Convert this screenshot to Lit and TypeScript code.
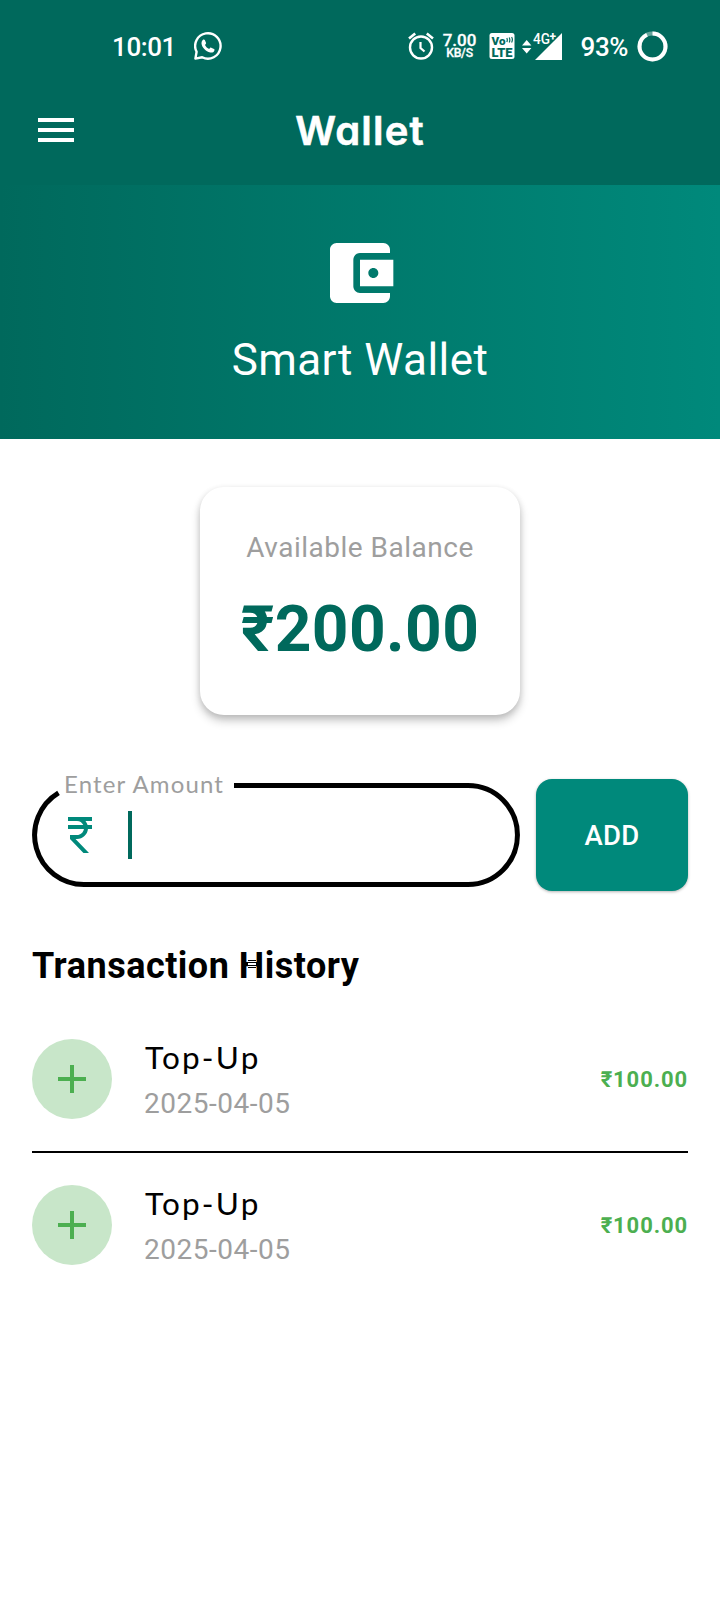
import { LitElement, html, css } from "lit";
import { customElement, property } from "lit/decorators.js";

@customElement("status-bar")
class StatusBar extends LitElement {
  static styles = css`
    :host { display: flex; align-items: center; height: 92px; padding: 0 52px 0 112px; box-sizing: border-box; color: #fff; font-family: Roboto, sans-serif; }
    svg { display: block; flex: none; }
    .time { font-size: 26px; line-height: 30px; padding-top: 2px; font-weight: 500; letter-spacing: -0.4px; width: 82px; }
    .grow { flex: 1; }
    .rate { width: 34px; margin: 0 12px 0 9px; font-weight: 500; display: flex; flex-direction: column; align-items: center; white-space: nowrap; }
    .num { font-size: 17px; line-height: 14px; -webkit-text-stroke: 0.3px #fff; }
    .unit { font-size: 12.2px; line-height: 12px; letter-spacing: -0.2px; -webkit-text-stroke: 0.3px #fff; }
    .net-icon { margin-left: 5px; }
    .pct { font-size: 26px; line-height: 30px; padding-top: 2px; font-weight: 500; margin: 0 9px 0 19px; letter-spacing: -0.4px; }
    .vo { font: 900 11.5px Roboto, sans-serif; }
    .lte { font: 900 12px Roboto, sans-serif; }
    .net { font: 500 14px Roboto, sans-serif; }
    .plus { font: 700 12px Roboto, sans-serif; }
  `;
  render() {
    return html`
      <span class="time">10:01</span>
      <svg width="28" height="28" viewBox="0 0 28 28">
        <path d="M1.400 26.600 2.600 19.800A12.700 12.700 0 1 1 8.200 25.300Z" fill="none" stroke="#fff" stroke-width="2.400" stroke-linejoin="round"/>
        <path d="M9 7.800c.6-.6 1.500-.4 1.800.3l1.200 2.700c.2.600-.1 1.100-1 2.100 1 1.900 2.300 3.100 4.200 4 .9-1.100 1.400-1.500 2-1.200l2.800 1.300c.6.300.6.800.4 1.400-.6 1.700-2.300 2.500-4.100 2.100-4.600-1-8.400-4.900-8.800-8.900 0-1.700.5-2.900 1.500-3.800Z" fill="#fff"/>
      </svg>
      <span class="grow"></span>
      <svg width="26" height="28" viewBox="0 0 26 28" fill="none" stroke="#fff">
        <circle cx="13" cy="15.500" r="11" stroke-width="2.400"/>
        <path d="M1 6.400 7.200 1.400M25 6.400 18.800 1.400" stroke-width="2.600"/>
        <path d="M12.500 10v6l4 3.500" stroke-width="2.200"/>
      </svg>
      <span class="rate"><span class="num">7.00</span><span class="unit">KB/S</span></span>
      <svg width="26" height="26" viewBox="0 0 26 26">
        <rect width="25" height="26" x=".5" rx="2.500" fill="#fff"/>
        <text class="vo" x="2.500" y="11.500" fill="#00695c" textLength="14" lengthAdjust="spacingAndGlyphs">Vo</text>
        <path d="M17.800 5q1 2 0 4M20.200 4.500q1.300 2.500 0 5M22.600 4q1.600 2.500 0 5.500" fill="none" stroke="#00695c" stroke-width="1.200"/>
        <text class="lte" x="2.500" y="23.500" fill="#00695c" textLength="21" lengthAdjust="spacingAndGlyphs">LTE</text>
      </svg>
      <svg class="net-icon" width="42" height="30" viewBox="0 0 42 30" fill="#fff">
        <path d="M2 14.500 6.700 9l4.700 5.500ZM2 17h9.400l-4.700 5.500Z"/>
        <path d="M15 29 42 2v27Z"/>
        <text class="net" x="13" y="12.500" textLength="17" lengthAdjust="spacingAndGlyphs" stroke="#00695c" stroke-width="1.500" paint-order="stroke">4G</text>
        <text class="plus" x="29.500" y="9.500" stroke="#00695c" stroke-width="1.500" paint-order="stroke">+</text>
      </svg>
      <span class="pct">93%</span>
      <svg width="31" height="31" viewBox="0 0 31 31" fill="none" stroke-width="4">
        <circle cx="15.500" cy="15.500" r="13" stroke="#66a59d"/>
        <circle cx="15.500" cy="15.500" r="13" stroke="#fff" pathLength="100" stroke-dasharray="93 7" transform="rotate(-90 15.500 15.500)"/>
      </svg>`;
  }
}

@customElement("transaction-row")
class TransactionRow extends LitElement {
  @property() name = "";
  @property() date = "";
  @property() amount = "";
  static styles = css`
    :host { display: flex; align-items: center; height: 80px; font-family: Roboto, sans-serif; }
    .badge { width: 80px; height: 80px; border-radius: 50%; background: #c8e6c9; display: grid; place-items: center; margin-right: 32px; }
    .text { flex: 1; display: flex; flex-direction: column; }
    .name { font: 400 31.500px/44px Lato, sans-serif; padding: 1px 0 0 1px; letter-spacing: 2.2px; color: #000; }
    .date { font-size: 28px; line-height: 40px; padding-top: 5px; letter-spacing: 0.5px; color: #9e9e9e; }
    .amount { font-size: 22px; font-weight: 700; line-height: 26px; padding-top: 1px; letter-spacing: 0.9px; color: #4caf50; }
  `;
  render() {
    return html`
      <span class="badge"><svg width="48" height="48" viewBox="0 0 24 24"><path fill="#4caf50" d="M19 13h-6v6h-2v-6H5v-2h6V5h2v6h6v2z"/></svg></span>
      <span class="text"><span class="name">${this.name}</span><span class="date">${this.date}</span></span>
      <span class="amount">${this.amount}</span>`;
  }
}

@customElement("app-root")
class AppRoot extends LitElement {
  static styles = css`
    :host { display: block; width: 720px; height: 1600px; overflow: hidden; background: #fff; font-family: Roboto, sans-serif; }
    svg { display: block; }
    .top { background: #00695c; height: 185px; }
    .appbar { display: grid; grid-template-columns: 112px 1fr 112px; align-items: center; height: 75px; }
    .menu { margin-left: 32px; }
    .title { text-align: center; color: #fff; font: 600 40px/50px Inter, sans-serif; letter-spacing: 1.2px; padding-top: 2px; font-feature-settings: "cv11"; -webkit-text-stroke: 0.6px #fff; }
    .hero { height: 254px; box-sizing: border-box; padding-top: 48px; background: linear-gradient(90deg, #00695c, #00897b); display: flex; flex-direction: column; align-items: center; color: #fff; }
    .hero-name { margin-top: 17px; font-size: 44px; line-height: 60px; letter-spacing: 0.45px; }
    .card { width: 320px; height: 228px; margin: 48px auto 0; border-radius: 24px; box-sizing: border-box; padding-top: 41px; text-align: center; box-shadow: 0 6px 10px rgba(0,0,0,.2), 0 2px 6px rgba(0,0,0,.12); }
    .caption { font-size: 28px; line-height: 40px; letter-spacing: 0.5px; color: #9e9e9e; }
    .balance { margin-top: 17px; font-size: 64px; line-height: 90px; font-weight: 700; color: #00695c; letter-spacing: 0.4px; }
    .form { display: flex; align-items: center; gap: 16px; margin: 64px 32px 0; }
    .field { position: relative; width: 488px; height: 104px; display: flex; align-items: center; box-sizing: border-box; padding-left: 24px; }
    .outline { position: absolute; inset: 0; }
    .label { position: absolute; left: 32px; top: -16px; font: 400 24px/34px Lato, sans-serif; letter-spacing: 1.15px; color: #9e9e9e; }
    .caret { width: 4px; height: 48px; margin-left: 24px; background: #00695c; }
    .add { width: 152px; height: 112px; border: 0; border-radius: 16px; background: #00897b; color: #fff; font: 500 27.500px Roboto, sans-serif; letter-spacing: 0.3px; box-shadow: 0 1px 3px rgba(0,0,0,.3); padding: 0; }
    .heading { margin: 50px 32px 0; position: relative; font-size: 36px; line-height: 50px; font-weight: 700; letter-spacing: 0.5px; color: #000; }
    .mark { position: absolute; left: 215px; top: 18px; }
    .list { margin: 48px 32px 0; }
    .rule { height: 2px; background: #000; margin: 32px 0; }
  `;
  render() {
    return html`
      <div class="top">
        <status-bar></status-bar>
        <div class="appbar">
          <svg class="menu" width="48" height="48" viewBox="0 0 24 24"><path fill="#fff" d="M3 18h18v-2H3v2zm0-5h18v-2H3v2zm0-7v2h18V6H3z"/></svg>
          <div class="title">Wallet</div>
        </div>
      </div>
      <div class="hero">
        <svg width="80" height="80" viewBox="0 0 24 24"><path fill="#fff" d="M21 18v1c0 1.100-.9 2-2 2H5c-1.110 0-2-.9-2-2V5c0-1.100.89-2 2-2h14c1.100 0 2 .9 2 2v1h-9c-1.110 0-2 .9-2 2v8c0 1.100.89 2 2 2h9zm-9-2h10V8H12v8zm4-2.500c-.83 0-1.500-.67-1.500-1.500s.67-1.500 1.500-1.500 1.500.67 1.500 1.500-.67 1.500-1.500 1.500z"/></svg>
        <div class="hero-name">Smart Wallet</div>
      </div>
      <div class="card">
        <div class="caption">Available Balance</div>
        <div class="balance">₹200.00</div>
      </div>
      <div class="form">
        <div class="field">
          <svg class="outline" width="488" height="104" viewBox="0 0 488 104"><path fill="none" stroke="#000" stroke-width="5" d="M202 2.600H436A49.400 49.400 0 0 1 436 101.500H52A49.400 49.400 0 0 1 26.500 9.800"/></svg>
          <span class="label">Enter Amount</span>
          <svg width="48" height="48" viewBox="0 0 24 24"><path fill="#00897b" d="M13.660 7C13.100 5.820 11.900 5 10.500 5H6V3h12v2h-3.260c.48.58.84 1.260 1.050 2H18v2h-2.020c-.25 2.800-2.610 5-5.480 5h-.73l6.730 7h-2.770L7 14v-2h3.500c1.760 0 3.220-1.300 3.460-3H6V7h7.660z"/></svg>
          <span class="caret"></span>
        </div>
        <button class="add">ADD</button>
      </div>
      <div class="heading">Transaction History
        <svg class="mark" width="10" height="10" viewBox="0 0 10 10"><path fill="#fff" d="M1 0h8v10H1z"/><path fill="#000" d="M1 1h8v1H1zM0 3h10v1H0zM0 6h10v1H0zM1 8h8v1H1z"/></svg>
      </div>
      <div class="list">
        <transaction-row name="Top-Up" date="2025-04-05" amount="₹100.00"></transaction-row>
        <div class="rule"></div>
        <transaction-row name="Top-Up" date="2025-04-05" amount="₹100.00"></transaction-row>
      </div>`;
  }
}
